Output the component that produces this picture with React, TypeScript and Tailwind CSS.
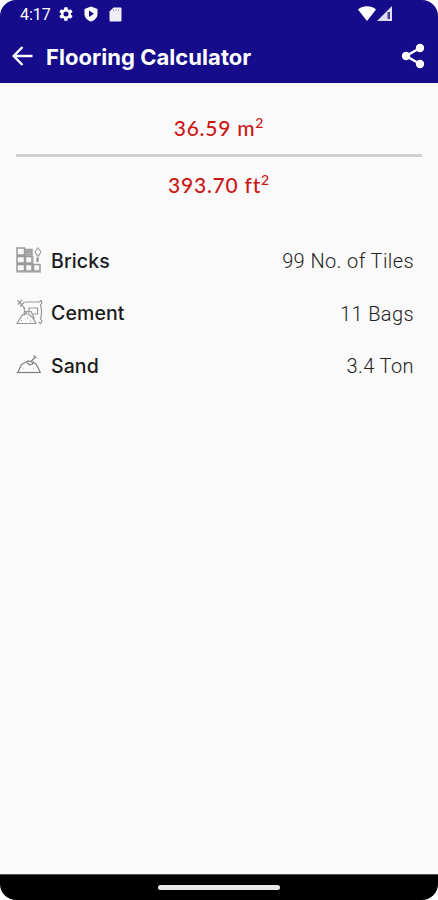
import type { ReactNode } from 'react'

function BricksIcon() {
  return (
    <svg className="-mt-0.5" width="26" height="26" viewBox="0 0 26 26" fill="none" stroke="#9a9a9a" strokeWidth="1.5">
      <path d="M1 1h7.500v7H1zM1 9.500h7.500v6.500H1zM9.500 9.500H16v6.500H9.500zM1 17.500h7.500v6.500H1zM9.500 17.500H16v6.500H9.500zM17.500 17.500H24v6.500h-6.500z" />
      <path d="M9 2.500h7v5.500H9zM9 5h7" fill="#b5b5b5" />
      <path d="M17 9v8M.5 25h24.500" strokeWidth="1" />
      <path d="M22 1l2.800 3.500-1.300 3.500h-3l-1.300-3.500zM22 8v2.500" strokeWidth="1.100" />
      <path d="M21.500 10.500v4.500" stroke="#888" strokeWidth="2" />
    </svg>
  )
}

function CementIcon() {
  return (
    <svg className="-mt-[3px]" width="27" height="26" viewBox="0 0 27 26" fill="none" stroke="#989898" strokeWidth="1.200">
      <path d="M9 3h14.500l1.500-1.500 1 2-1.500 2.500c1.500 5 1.500 9 0 14l1.500 2-1.500 2.500-2-1.500" />
      <path d="M8 8c.8 3 .8 5 0 8" />
      <path d="M13 14V9h8.500v6H16M13 12.500H9M8 16l3-3.500h4l3.500 7" />
      <path d="M1 24.500l5-8 2.500-1.500h4l4 3.500 3.500 6zM5 21.500h1M11 19h1M14 22h1" />
      <path d="M1.500 1.500L6 6M2 5.500l4-4.500M4 7.500L8.500 3M6 6l3 4" />
    </svg>
  )
}

function SandIcon() {
  return (
    <svg className="-mt-[5px]" width="26" height="20" viewBox="0 0 26 20" fill="none" stroke="#808080" strokeWidth="1.200">
      <path d="M.5 18.500h24.500" />
      <path d="M2 18l3.500-7.500L9 8.800 12 7l3.500.8L20 10l2.200 4L24 18" />
      <path d="M11 8.500l2.500 2.300 3-.8 1-2.500M15 7.500l3.800-4M17.500 1.500l3 2.500" />
      <path d="M7 14.500h1M17 14.500h1" stroke="#c4c4c4" />
    </svg>
  )
}

function StatusBar() {
  return (
    <div className="flex h-7 items-center pl-5 pr-[46px] text-white">
      <span className="mt-px w-[38px] text-[16px] leading-none font-['Roboto',sans-serif]">4:17</span>
      <svg width="16" height="16" viewBox="0 0 24 24" fill="white">
        <path fillRule="evenodd" d="M19.4 13a7.500 7.500 0 0 0 0-2l2.100-1.600a.5.5 0 0 0 .1-.6l-2-3.500a.5.5 0 0 0-.6-.2l-2.500 1a7.300 7.300 0 0 0-1.700-1l-.4-2.700a.5.5 0 0 0-.5-.4h-4a.5.5 0 0 0-.5.4L9 5.100a7.300 7.300 0 0 0-1.700 1l-2.500-1a.5.5 0 0 0-.6.2l-2 3.500a.5.5 0 0 0 .1.600L4.600 11a7.500 7.500 0 0 0 0 2l-2.300 1.600a.5.5 0 0 0-.1.600l2 3.500c.1.200.4.300.6.200l2.500-1a7.300 7.300 0 0 0 1.700 1l.4 2.700c0 .2.200.4.500.4h4c.3 0 .5-.2.500-.4l.4-2.700a7.300 7.300 0 0 0 1.700-1l2.500 1c.2.100.5 0 .6-.2l2-3.500a.5.5 0 0 0-.1-.6zM12 15.800a3.800 3.800 0 1 1 0-7.600 3.800 3.800 0 0 1 0 7.600z" />
      </svg>
      <svg className="ml-2.5" width="14" height="16" viewBox="0 0 14 16">
        <path d="M7 .5L13.500 3v5c0 3.500-2.500 6.200-6.500 7.500C3 14.200.5 11.500.5 8V3z" fill="white" />
        <path d="M5 4.500L10 7.800 5 11z" fill="#160b8a" />
      </svg>
      <svg className="ml-[11px]" width="13" height="15" viewBox="0 0 13 15">
        <path d="M4.500.5h7a1 1 0 0 1 1 1v12a1 1 0 0 1-1 1h-10a1 1 0 0 1-1-1V4.500z" fill="#f0eff8" />
        <path d="M4.500 2.200v2M7 2.200v2M9.500 2.200v2" stroke="#a9a4d4" />
      </svg>
      <svg className="-mt-px ml-auto" width="18" height="15" viewBox="0 0 18 15">
        <path d="M0 3.500C5-.8 13-.8 18 3.500L9 15z" fill="white" />
      </svg>
      <svg className="-mt-px ml-px" width="15" height="15" viewBox="0 0 15 15">
        <path d="M15 0v15H0z" fill="#dedcf0" />
        <path d="M10.500 6h2.500v7h-2.500z" fill="#463ca0" />
      </svg>
    </div>
  )
}

function Header() {
  return (
    <header className="h-[83px] bg-[#160b8a]">
      <StatusBar />
      <div className="flex h-[55px] items-center pl-3 pr-[13px]">
        <svg width="21" height="20" viewBox="0 0 21 20" fill="none" stroke="white" strokeWidth="2.400">
          <path d="M20.500 10H1.700M10.500 1L1.700 10l8.800 9" />
        </svg>
        <h1 className="ml-[13px] mt-0.5 text-[22px] leading-7 font-bold tracking-[0.05px] text-white whitespace-nowrap">Flooring Calculator</h1>
        <svg className="ml-auto" width="24" height="26" viewBox="0 0 24 26" fill="white">
          <path d="M19 5L5 13l14 8" fill="none" stroke="white" strokeWidth="2.400" />
          <circle cx="19" cy="5" r="4.200" />
          <circle cx="5" cy="13" r="4.200" />
          <circle cx="19" cy="21" r="4.200" />
        </svg>
      </div>
    </header>
  )
}

function Area({ value, unit }: { value: string; unit: string }) {
  return (
    <p className="text-center text-[21px] leading-7 tracking-[0.75px] text-[#cc1717] font-['Lato',sans-serif] font-medium">
      {value} {unit}
      <sup className="text-[14px] leading-none top-[-8px]">2</sup>
    </p>
  )
}

function Row({ icon, label, value }: { icon: ReactNode; label: string; value: string }) {
  return (
    <li className="flex h-[52.500px] items-center pl-4 pr-6 text-[20px]">
      <span className="flex w-[35px] shrink-0">{icon}</span>
      <span className="text-[19.500px] font-medium tracking-[0.1px] text-[#1b1b1b]">{label}</span>
      <span className="ml-auto text-[20px] font-light tracking-[0.4px] text-[#222] font-['Roboto',sans-serif]">{value}</span>
    </li>
  )
}

export default function App() {
  return (
    <div className="h-[900px] w-[438px] bg-white">
      <div className="flex h-full flex-col overflow-hidden rounded-[16px] bg-[#fafafa] font-['Inter',sans-serif]">
        <Header />
        <main className="flex-1">
          <section className="pt-[31px]">
            <Area value="36.59" unit="m" />
            <hr className="mx-4 mt-3 mb-3.5 border-0 h-[3px] bg-[#d2d2d2]" />
            <Area value="393.70" unit="ft" />
          </section>
          <ul className="mt-9">
            <Row icon={<BricksIcon />} label="Bricks" value="99 No. of Tiles" />
            <Row icon={<CementIcon />} label="Cement" value="11 Bags" />
            <Row icon={<SandIcon />} label="Sand" value="3.4 Ton" />
          </ul>
        </main>
        <footer className="flex h-[26px] items-center justify-center border-t border-[#555] bg-black">
          <div className="h-[5px] w-[122px] rounded-full bg-[#e8e8e8]" />
        </footer>
      </div>
    </div>
  )
}
